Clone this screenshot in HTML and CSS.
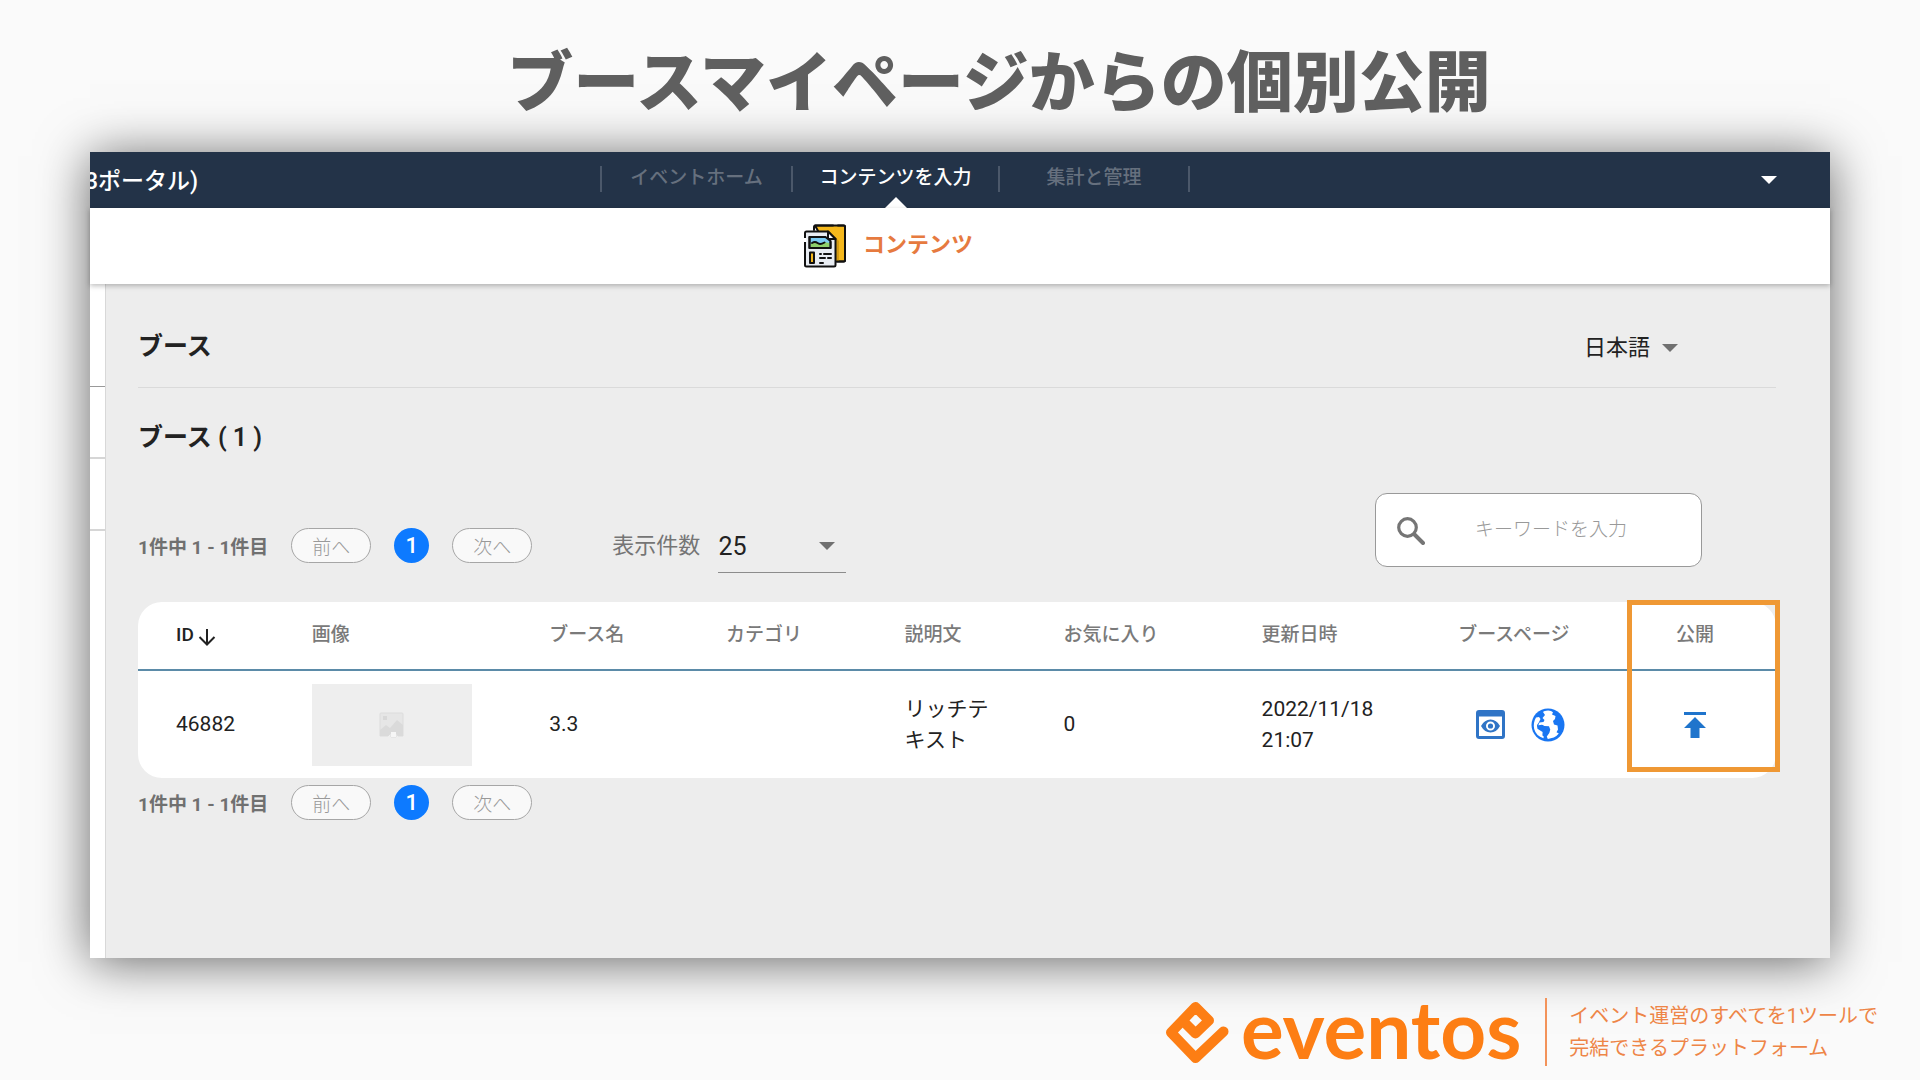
FILE: index.html
```
<!DOCTYPE html>
<html lang="ja">
<head>
<meta charset="utf-8">
<meta name="viewport" content="width=device-width, initial-scale=1">
<title>ブースマイページからの個別公開</title>
<link rel="stylesheet" href="styles.css">
</head>
<body>
<h1 class="page-title">ブースマイページからの個別公開</h1>

<main class="window">
  <header class="topbar">
    <span class="brand"><span class="brand-text">3ポータル)</span></span>
    <nav class="tabs">
      <a class="tab tab-home" href="#">イベントホーム</a>
      <a class="tab tab-input active" href="#">コンテンツを入力</a>
      <a class="tab tab-manage" href="#">集計と管理</a>
    </nav>
    <button class="account" aria-label="アカウント"><svg width="16" height="8" viewBox="0 0 16 8"><path d="M0 0h16l-8 8z" fill="currentColor"/></svg></button>
  </header>

  <div class="subbar">
    <a class="subbar-link" href="#">
      <svg width="44" height="46" viewBox="0 0 44 46" fill="none" stroke="#111" stroke-width="2" stroke-linejoin="round" stroke-linecap="round">
        <path d="M12 2.500h29q1 0 1 1v34q0 1-1 1H32z" fill="#f5b81c"/>
        <path d="M32 38V14l4 4v20z" fill="#d39a12" stroke="none"/>
        <path d="M11 7V4q0-1.500 1.500-1.500H30M35 2.500h5.500Q42 2.500 42 4v22M42 31v6q0 1.500-1.500 1.500H34"/>
        <path d="M3.500 8.500H25l7.500 7.500v26q0 1.500-1.500 1.500H3.500Q2 43.500 2 42V10q0-1.500 1.500-1.500z" fill="#e9edf3"/>
        <path d="M25 8.500V16h7.500z" fill="#fff"/>
        <path d="M6.500 14h16l5 4v7h-21z" fill="#7ccbf2"/>
        <path d="M7.500 21q4-4 7-1 4 2 6-1l6 1v4h-19z" fill="#8ed06b" stroke="none"/>
        <path d="M9 20q3-2 5.500 0t7-.5M6.500 14h15M6.500 14v11h21v-6"/>
        <path d="M7 29.500h4V40H7z" fill="#f5b81c"/>
        <path d="M17 31h1M21 31h7M17 35h5M25 35h3M17 40h3"/>
        <path d="M2 15v4" stroke="#fff" stroke-width="3" stroke-linecap="butt"/>
      </svg>
      <span class="subbar-text">コンテンツ</span>
    </a>
  </div>

  <div class="body">
    <aside class="rail">
      <div class="rail-item rail-first"></div>
      <div class="rail-item"></div>
      <div class="rail-item"></div>
    </aside>

    <section class="content">
      <div class="content-head">
        <h2 class="heading">ブース</h2>
        <div class="select language">
          <select aria-label="言語"><option>日本語</option></select>
          <svg class="caret" width="16" height="8" viewBox="0 0 16 8"><path d="M0 0h16l-8 8z"/></svg>
        </div>
      </div>

      <h2 class="heading count">ブース ( 1 )</h2>

      <div class="toolbar">
        <div class="pager">
          <span class="pager-info">1件中 1 - 1件目</span>
          <button class="pager-step" disabled>前へ</button>
          <button class="pager-page">1</button>
          <button class="pager-step" disabled>次へ</button>
        </div>
        <div class="per-page">
          <label for="per-page">表示件数</label>
          <div class="select">
            <select id="per-page"><option>25</option></select>
            <svg class="caret" width="16" height="8" viewBox="0 0 16 8"><path d="M0 0h16l-8 8z"/></svg>
          </div>
        </div>
        <div class="search">
          <svg width="28" height="28" viewBox="0 0 28 28" fill="none" stroke="#757575"><circle cx="10.500" cy="10.500" r="8.800" stroke-width="3.200"/><path d="M17.500 17.500L26 26" stroke-width="4" stroke-linecap="round"/></svg>
          <input type="text" aria-label="キーワード検索" placeholder="キーワードを入力">
        </div>
      </div>

      <div class="table-card">
        <table class="booths">
          <colgroup>
            <col class="c-id"><col class="c-image"><col class="c-name"><col class="c-category"><col class="c-text"><col class="c-fav"><col class="c-date"><col class="c-page"><col class="c-publish">
          </colgroup>
          <thead>
            <tr>
              <th class="sorted">ID<svg width="18" height="18" viewBox="0 0 18 18" fill="none" stroke="#222" stroke-width="2"><path d="M9 1v15M1.500 9L9 16.500 16.500 9"/></svg></th>
              <th>画像</th><th>ブース名</th><th>カテゴリ</th><th>説明文</th><th>お気に入り</th><th>更新日時</th><th>ブースページ</th><th>公開</th>
            </tr>
          </thead>
          <tbody>
            <tr>
              <td>46882</td>
              <td>
                <div class="thumb">
                  <svg width="26" height="26" viewBox="0 0 26 26"><path d="M2 1h21q1 0 1 1v22h-5l-2-3v4h-5v-4l-3 3H1V2q0-1 1-1z" fill="#e6e6e6" stroke="#dcdcdc"/><path d="M1 18l6-5 4 3 7-8 6 5v11h-5l-2-3h-5l-3 3H1z" fill="#dadada"/><path d="M4 4h4v4H4z" fill="#d8d8d8"/><path d="M12 20h5v5h-5z" fill="#f6f6f6"/></svg>
                </div>
              </td>
              <td>3.3</td>
              <td></td>
              <td>リッチテキスト</td>
              <td>0</td>
              <td>2022/11/18 21:07</td>
              <td>
                <div class="actions">
                  <button class="icon-btn" aria-label="プレビュー"><svg width="29" height="29" viewBox="0 0 29 29" fill="#2f74c6"><path fill-rule="evenodd" d="M3 0h23a3 3 0 0 1 3 3v23a3 3 0 0 1-3 3H3a3 3 0 0 1-3-3V3a3 3 0 0 1 3-3zM3 6.500V26h23V6.500z"/><path fill-rule="evenodd" d="M5 16q3.500-6.500 9.500-6.500T24 16q-3.500 6.500-9.500 6.500T5 16zM14.500 11.500a4.500 4.500 0 1 0 0 9 4.500 4.500 0 0 0 0-9z"/><circle cx="14.500" cy="16" r="2.600"/></svg></button>
                  <button class="icon-btn" aria-label="ページを開く"><svg width="34" height="34" viewBox="0 0 34 34"><circle cx="17" cy="17" r="16.500" fill="#1976f2"/><path fill="#fff" d="M13 3.200q3.500-1 7-.3l2 1.400-1 2.200 3.500 1.500-.5 3-2 2 1 3.500 3.500 1 .5 4-1.500 2.800 2.300 1.200q-2 2.600-5 4l-6 1.500-1-2.500 2.500-3.500 1-3.500-1.500-2H14l-2.500-2.500-4.500 1 1.500-3.500 4-.5 1-2-2-2 2.500-3-2-3z"/><path fill="#fff" d="M5 9.500l3-.5 1.500 2-2 4-1.500 2L6.500 21l5 1 1.500 3-.5 5.200Q5 28 3.200 21q-1.400-6 1.800-11.500z"/><path fill="#1976f2" d="M6 17.500l5-.8 2.500 1.300 4.500.2.800 2.400-2.600 3-2.400 5.400-2.400-1.500.2-3.500-4-2.500z"/></svg></button>
                </div>
              </td>
              <td>
                <button class="icon-btn publish" aria-label="公開"><svg width="22" height="26" viewBox="0 0 22 26" fill="#1f74cc"><path d="M0 0h22v3H0zM11 5l11 11h-6.500v10h-9V16H0z"/></svg></button>
              </td>
            </tr>
          </tbody>
        </table>
        <div class="highlight"></div>
      </div>

      <div class="pager pager-bottom">
        <span class="pager-info">1件中 1 - 1件目</span>
        <button class="pager-step" disabled>前へ</button>
        <button class="pager-page">1</button>
        <button class="pager-step" disabled>次へ</button>
      </div>
    </section>
  </div>
</main>

<footer class="footer">
  <svg class="logo-mark" width="64" height="64" viewBox="0 0 64 64" fill="none" stroke="#fd7e14" stroke-width="10" stroke-linejoin="round" stroke-linecap="round"><path d="M58.500 31.500L30.500 58 6 32.500 30.500 7 44 20.500 30.500 33.500 17.500 20.500"/></svg>
  <span class="logo-text">eventos</span>
  <p class="tagline">イベント運営のすべてを1ツールで<br>完結できるプラットフォーム</p>
</footer>
</body>
</html>
```
FILE: styles.css
```
* { box-sizing: border-box; }

body {
  margin: 0;
  background: #fafafa;
  color: #222;
  font-family: Roboto, "Noto Sans CJK JP", sans-serif;
  font-size: 21px;
  line-height: 31px;
}

h1, h2, p { margin: 0; }
a { color: inherit; text-decoration: none; }
svg { display: block; flex: none; }

button, input, select {
  font: inherit;
  color: inherit;
  border: 0;
  padding: 0;
  margin: 0;
  background: none;
}

.page-title {
  padding: 36px 0 20px 78px;
  text-align: center;
  color: #5f5f5f;
  font-size: 66px;
  font-weight: 900;
  line-height: 96px;
}

.window {
  margin: 0 90px;
  background: #ededed;
  box-shadow: 0 4px 48px rgba(0, 0, 0, .6);
}

/* top navigation */
.topbar, .subbar {
  display: grid;
  grid-template-columns: 510fr 590px 640fr;
}

.topbar {
  height: 56px;
  background: #233348;
  color: #fff;
}

.brand {
  display: flex;
  justify-content: flex-start;
  overflow: hidden;
  font-size: 23px;
  font-weight: 500;
  line-height: 60px;
}

.brand-text { margin-left: -5px; }

.tabs {
  display: grid;
  grid-template-columns: 191px 207px 1fr;
  height: 26px;
  margin-top: 14px;
  border-left: 2px solid #4b586a;
}

.tab {
  position: relative;
  border-right: 2px solid #4b586a;
  text-align: center;
  font-size: 19px;
  font-weight: 500;
  line-height: 24px;
  color: #66707e;
}

.tab.active { color: #fff; }

.tab.active::after {
  content: "";
  position: absolute;
  left: 50%;
  bottom: -16px;
  margin-left: -11px;
  border: 11px solid transparent;
  border-top-width: 0;
  border-bottom-color: #fff;
}

.account {
  justify-self: end;
  margin-right: 53px;
}

.subbar {
  position: relative;
  height: 76px;
  background: #fff;
  box-shadow: 0 2px 5px rgba(0, 0, 0, .25);
}

.subbar-link {
  grid-column: 2;
  display: flex;
  align-items: center;
  justify-content: center;
  gap: 16px;
  padding-right: 14px;
  color: #e67a3f;
  font-size: 22px;
  font-weight: 700;
}

.subbar-text { padding-bottom: 4px; }

/* body */
.body { display: flex; }

.rail {
  width: 16px;
  padding-top: 31px;
  background: #fff;
  border-right: 1px solid #d8d8d8;
}

.rail-item {
  height: 72px;
  border-bottom: 2px solid #d6d6d6;
}

.rail-first { border-bottom: 1px solid #999; }

.content {
  flex: 1;
  padding: 45px 54px 138px 32px;
}

.content-head {
  display: flex;
  justify-content: space-between;
  padding-bottom: 22px;
  border-bottom: 1px solid #dadada;
}

.heading {
  font-size: 25px;
  font-weight: 600;
  line-height: 36px;
}

.count { margin-top: 32px; }

.select { position: relative; }
.select select { appearance: none; width: 100%; }

.caret {
  position: absolute;
  right: 0;
  top: 50%;
  margin-top: -3px;
  fill: #707070;
  pointer-events: none;
}

.language {
  width: 94px;
  margin-right: 98px;
  font-size: 22px;
}

.language select { height: 36px; }

/* pager and filters */
.toolbar {
  display: flex;
  align-items: flex-start;
  margin: 37px 74px 29px 0;
}

.pager {
  display: flex;
  align-items: center;
  gap: 23px;
}

.toolbar .pager { margin-top: 35px; }
.pager-bottom { margin-top: 7px; }

.pager-info {
  min-width: 129px;
  padding-top: 4px;
  color: #707070;
  font-size: 19px;
  font-weight: 700;
}

.pager-step {
  width: 80px;
  height: 35px;
  padding-top: 3px;
  border: 1px solid #a6a6a6;
  border-radius: 18px;
  background: #f9f9f9;
  color: #999;
  font-size: 19px;
  font-weight: 300;
}

.pager-page {
  width: 35px;
  height: 35px;
  border-radius: 50%;
  background: #0d7aff;
  color: #fff;
  font-size: 22px;
  font-weight: 500;
}

.per-page {
  display: flex;
  align-items: center;
  gap: 18px;
  margin: 28px 0 0 80px;
}

.per-page label {
  padding-bottom: 4px;
  color: #757575;
  font-size: 22px;
}

.per-page .select {
  width: 128px;
  height: 52px;
  padding-right: 10px;
  border-bottom: 1px solid #8c8c8c;
  font-size: 25px;
}

.per-page select { height: 50px; }
.per-page .caret { right: 11px; margin-top: -5px; }

.search {
  display: flex;
  align-items: center;
  gap: 50px;
  width: 327px;
  height: 74px;
  margin-left: auto;
  padding: 2px 21px 0;
  border: 1px solid #999;
  border-radius: 12px;
  background: #fff;
}

.search input {
  flex: 1;
  min-width: 0;
  height: 66px;
  padding-bottom: 4px;
  outline: 0;
  font-size: 19px;
  font-weight: 300;
}

.search input::placeholder { color: #999; opacity: 1; }

/* table */
.table-card {
  position: relative;
  border-radius: 24px;
  background: #fff;
}

.booths {
  width: 100%;
  table-layout: fixed;
  border-collapse: collapse;
}

.c-id { width: 10.6%; }
.c-image { width: 14.5%; }
.c-name { width: 10.8%; }
.c-category { width: 10.9%; }
.c-text { width: 9.7%; }
.c-fav { width: 12.1%; }
.c-date { width: 12%; }
.c-page { width: 13.3%; }

.booths th, .booths td {
  padding: 0 64px 0 0;
  text-align: left;
  vertical-align: middle;
}

.booths th {
  height: 68px;
  padding-right: 0;
  padding-bottom: 2px;
  border-bottom: 2px solid #5b8ba8;
  color: #7a7a7a;
  font-size: 19px;
  font-weight: 500;
}

.booths td { height: 108px; }
.booths td:last-child { padding-right: 0; }

.booths th:first-child, .booths td:first-child { padding-left: 38px; }

.booths .sorted { color: #222; }

.sorted svg {
  display: inline-block;
  margin-left: 4px;
  vertical-align: -5px;
}

.thumb {
  display: flex;
  align-items: center;
  justify-content: center;
  width: 160px;
  height: 82px;
  background: #eee;
}

.actions {
  display: flex;
  align-items: center;
  gap: 26px;
  padding-left: 18px;
}

.icon-btn { display: block; }
.publish { margin-left: 8px; }

.highlight {
  position: absolute;
  top: -2px;
  right: -4px;
  bottom: 6px;
  width: 153px;
  border: 5px solid #ef9834;
  pointer-events: none;
}

/* footer */
.footer {
  display: flex;
  align-items: center;
  justify-content: flex-end;
  padding: 28px 42px 0 0;
}

.logo-mark { margin-right: 12px; }

.logo-text {
  padding-bottom: 8px;
  margin-right: 24px;
  color: #fd7e14;
  font-family: Lato, sans-serif;
  font-size: 80px;
  font-weight: 700;
  line-height: 84px;
}

.tagline {
  padding: 2px 0 2px 22px;
  border-left: 2px solid #f3935a;
  color: #ee8547;
  font-size: 20px;
  line-height: 32px;
}
```
